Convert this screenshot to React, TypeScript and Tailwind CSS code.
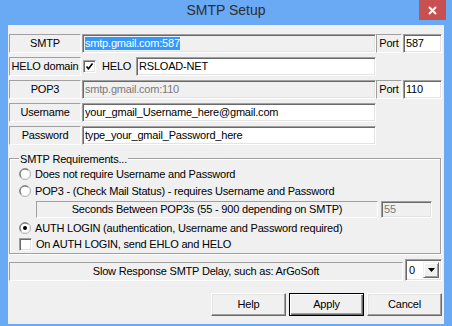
import React from "react";

const field =
  "border border-t-[#a0a0a0] border-l-[#a0a0a0] border-r-white border-b-white shadow-[inset_1px_1px_0_#696969,inset_-1px_-1px_0_#e3e3e3] flex items-center pl-[2px]";
const staticBox =
  "border border-t-[#a0a0a0] border-l-[#a0a0a0] border-r-white border-b-white flex items-center justify-center";
const button =
  "w-[75px] h-[23px] bg-[#f0f0f0] border border-t-white border-l-white border-r-[#696969] border-b-[#696969] shadow-[inset_-1px_-1px_0_#a0a0a0,inset_1px_1px_0_#e3e3e3] flex items-center justify-center";

const Radio = ({ checked = false }: { checked?: boolean }) => (
  <svg width="12" height="12" viewBox="0 0 12 12" className="shrink-0">
    <circle cx="6" cy="6" r="5.5" fill="#fff" stroke="#a0a0a0" />
    <path d="M2.5 9.5 A4.9 4.9 0 0 1 9.5 2.5" fill="none" stroke="#696969" />
    <path d="M9.5 2.5 A4.9 4.9 0 0 1 2.5 9.5" fill="none" stroke="#e3e3e3" />
    {checked && <circle cx="6" cy="6" r="2" fill="#000" />}
  </svg>
);

const Check = ({ checked = false }: { checked?: boolean }) => (
  <div className="w-[13px] h-[13px] shrink-0 bg-white border border-t-[#a0a0a0] border-l-[#a0a0a0] border-r-white border-b-white shadow-[inset_1px_1px_0_#696969,inset_-1px_-1px_0_#e3e3e3] flex items-center justify-center">
    {checked && (
      <svg width="9" height="9" viewBox="0 0 9 9">
        <path d="M1.5 4.5 L3.5 6.8 L7.5 1.5" fill="none" stroke="#000" strokeWidth="1.6" />
      </svg>
    )}
  </div>
);

export default function App() {
  return (
    <div className="w-[452px] h-[326px] bg-[#6aa9f4] flex flex-col font-['Liberation_Sans',Arial,sans-serif] text-[11px] tracking-[-0.2px] text-black">
      {/* title bar */}
      <div className="h-[25px] relative flex items-center justify-center pb-[4px]">
        <span className="text-[14px] tracking-normal text-[#2e2e2e]">SMTP Setup</span>
        <div className="absolute right-[6px] top-0 w-[27px] h-[20px] bg-[#c75050] flex items-center justify-center">
          <svg width="9" height="9" viewBox="0 0 9 9">
            <path d="M1 1 L8 8 M8 1 L1 8" stroke="#fff" strokeWidth="2" />
          </svg>
        </div>
      </div>

      <div className="mx-[8px] mb-[2px] flex-1 bg-[#f0f0f0] pl-[1px] pr-[2px] pt-[9px] flex flex-col">
        <div className="flex flex-col gap-[4px]">
          <div className="flex h-[19px]">
            <div className={`${staticBox} w-[72px]`}>SMTP</div>
            <div className={`${field} ml-[1px] w-[294px] bg-[#f0f0f0]`}>
              <span className="bg-[#3399ff] text-white leading-[13px]">smtp.gmail.com:587</span>
            </div>
            <div className={`${staticBox} w-[26px]`}>Port</div>
            <div className={`${field} ml-[1px] w-[39px] bg-white`}>587</div>
          </div>

          <div className="flex h-[19px] items-center">
            <div className={`${staticBox} w-[72px] h-full`}>HELO domain</div>
            <div className="ml-[2px]">
              <Check checked />
            </div>
            <span className="ml-[6px]">HELO</span>
            <div className={`${field} ml-auto mr-[66px] w-[240px] h-full bg-white`}>RSLOAD-NET</div>
          </div>

          <div className="flex h-[19px]">
            <div className={`${staticBox} w-[72px]`}>POP3</div>
            <div className={`${field} ml-[1px] w-[294px] bg-[#f0f0f0] text-[#7a7a7a]`}>smtp.gmail.com:110</div>
            <div className={`${staticBox} w-[26px]`}>Port</div>
            <div className={`${field} ml-[1px] w-[39px] bg-white`}>110</div>
          </div>

          <div className="flex h-[19px]">
            <div className={`${staticBox} w-[72px]`}>Username</div>
            <div className={`${field} ml-[1px] w-[294px] bg-white`}>your_gmail_Username_here@gmail.com</div>
          </div>

          <div className="flex h-[19px]">
            <div className={`${staticBox} w-[72px]`}>Password</div>
            <div className={`${field} ml-[1px] w-[294px] bg-white`}>type_your_gmail_Password_here</div>
          </div>
        </div>

        {/* SMTP Requirements group */}
        <div className="relative mt-[13px] mr-[1px] h-[96px] border border-[#a0a0a0] shadow-[inset_1px_1px_0_#fff,1px_1px_0_#fff] pt-[7px] pl-[9px] pr-[8px] flex flex-col">
          <span className="absolute -top-[8px] left-[9px] bg-[#f0f0f0] px-[1px]">SMTP Requirements...</span>
          <div className="flex items-center gap-[4px] h-[16px]">
            <Radio />
            <span>Does not require Username and Password</span>
          </div>
          <div className="flex items-center gap-[4px] h-[16px] mt-[1px]">
            <Radio />
            <span>POP3 - (Check Mail Status) - requires Username and Password</span>
          </div>
          <div className="flex h-[17px] mt-[2px] pl-[17px]">
            <div className={`${staticBox} w-[342px]`}>Seconds Between POP3s (55 - 900 depending on SMTP)</div>
            <div className={`${field} ml-[3px] w-[51px] bg-[#f0f0f0] text-[#7a7a7a]`}>55</div>
          </div>
          <div className="flex items-center gap-[4px] h-[16px] mt-[2px]">
            <Radio checked />
            <span>AUTH LOGIN (authentication, Username and Password required)</span>
          </div>
          <div className="flex items-center gap-[4px] h-[16px]">
            <Check />
            <span>On AUTH LOGIN, send EHLO and HELO</span>
          </div>
        </div>

        {/* slow response */}
        <div className="flex items-end h-[22px] mt-[5px]">
          <div className={`${staticBox} w-[394px] h-[19px]`}>Slow Response SMTP Delay, such as: ArGoSoft</div>
          <div className={`${field} ml-[2px] w-[37px] h-full bg-white justify-between pr-[2px]`}>
            <span className="pl-[1px]">0</span>
            <div className="w-[16px] h-[16px] bg-[#f0f0f0] border border-t-[#f0f0f0] border-l-[#f0f0f0] border-r-[#696969] border-b-[#696969] shadow-[inset_1px_1px_0_#fff,inset_-1px_-1px_0_#a0a0a0] flex items-center justify-center">
              <svg width="7" height="4" viewBox="0 0 7 4">
                <path d="M0 0 H7 L3.5 4 Z" fill="#000" />
              </svg>
            </div>
          </div>
        </div>

        {/* buttons */}
        <div className="flex justify-end gap-[3px] mt-[12px]">
          <div className={button}>Help</div>
          <div className="w-[75px] h-[23px] bg-[#f0f0f0] border border-black shadow-[inset_1px_1px_0_#fff,inset_-1px_-1px_0_#696969,inset_-2px_-2px_0_#a0a0a0] flex items-center justify-center">
            Apply
          </div>
          <div className={button}>Cancel</div>
        </div>
      </div>
    </div>
  );
}
